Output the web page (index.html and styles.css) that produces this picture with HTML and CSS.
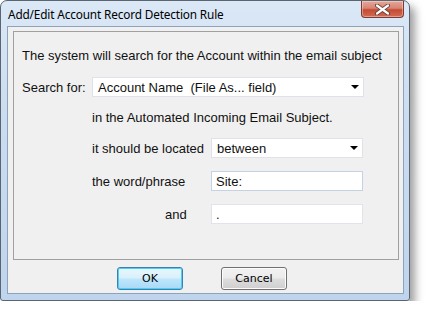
FILE: index.html
```html
<!DOCTYPE html>
<html lang="en">
<head>
  <meta charset="UTF-8" />
  <title>Add/Edit Account Record Detection Rule</title>
  <link rel="stylesheet" href="styles.css">
</head>
<body>
  <div class="window">
    <div class="titlebar">
      <span class="title">Add/Edit Account Record Detection Rule</span>
      <button class="close" title="Close">
        <svg width="17" height="11" viewBox="0 0 17 11">
          <path d="M3 1.5 L14 9.5 M14 1.5 L3 9.5" stroke="#5a3b36" stroke-width="4" stroke-linecap="round"/>
          <path d="M3 1.5 L14 9.5 M14 1.5 L3 9.5" stroke="#ffffff" stroke-width="2.2" stroke-linecap="round"/>
        </svg>
      </button>
    </div>

    <div class="client">
      <div class="panel">
        <p class="intro">The system will search for the Account within the email subject</p>

        <div class="form">
          <label class="lbl-search">Search for:</label>
          <div class="combo wide"><span>Account Name&nbsp; (File As... field)</span><i class="arrow"></i></div>

          <p class="note">in the Automated Incoming Email Subject.</p>

          <label>it should be located</label>
          <div class="combo"><span>between</span><i class="arrow"></i></div>

          <label>the word/phrase</label>
          <div class="field">Site:</div>

          <label class="lbl-and">and</label>
          <div class="field plain">.</div>
        </div>
      </div>

      <div class="buttons">
        <button class="btn default">OK</button>
        <button class="btn">Cancel</button>
      </div>
    </div>
  </div>
</body>
</html>
```

FILE: styles.css
```css
* {
  margin: 0;
  padding: 0;
  box-sizing: border-box;
}

body {
  background-color: #ffffff;
  font-family: 'Liberation Sans', Arial, sans-serif;
  font-size: 13px;
  color: #111;
}

/* janela */
.window {
  width: 410px;
  height: 301px;
  border: 1px solid #5b6572;
  border-radius: 7px 7px 3px 3px;
  background: linear-gradient(to bottom, #dbe8f6 0%, #cadcf0 40%, #bfd5ed 100%);
  box-shadow: 5px 6px 8px rgba(0, 0, 0, 0.38);
  padding: 0 5px 6px 6px;
  display: flex;
  flex-direction: column;
}

.titlebar {
  height: 25px;
  display: flex;
  align-items: flex-start;
  justify-content: space-between;
}

.title {
  font-family: 'Noto Sans', 'Liberation Sans', sans-serif;
  font-size: 11.8px;
  color: #000;
  padding: 5px 0 0 1px;
  letter-spacing: -0.15px;
}

.close {
  width: 43px;
  height: 17px;
  margin-right: 0;
  border: 1px solid #7d3a33;
  border-top: none;
  border-radius: 0 0 4px 4px;
  background: linear-gradient(to bottom, #e7a799 0%, #d88472 45%, #c44b35 55%, #d36a52 100%);
  box-shadow: inset 0 0 0 1px rgba(255, 255, 255, 0.35);
  display: flex;
  align-items: center;
  justify-content: center;
}

.client {
  flex: 1;
  background-color: #f0f0f0;
  border: 1px solid #8ea2b9;
  display: flex;
  flex-direction: column;
}

/* painel com o formulario */
.panel {
  margin: 4px 4px 0 5px;
  height: 229px;
  border: 1px solid #a0a0a0;
  padding: 16px 0 0 8px;
}

.intro {
  line-height: 16px;
  margin-bottom: 13px;
}

.form {
  display: grid;
  grid-template-columns: 70px 119px 153px;
  grid-template-rows: 20px 30px 31px 33px 33px;
  align-items: end;
}

.form label,
.form .note {
  height: 20px;
  display: flex;
  align-items: center;
}

.form .note {
  grid-column: 2 / 4;
}

.form label:not(.lbl-search) {
  grid-column: 2;
}

.lbl-and {
  padding-left: 73px;
}

.combo,
.field {
  height: 20px;
  background-color: #fff;
  border: 1px solid #dfe2e8;
  display: flex;
  align-items: center;
  padding-left: 5px;
}

.form .combo:last-of-type,
.field {
  height: 21px;
}

.combo.wide {
  grid-column: 2 / 4;
  height: 20px;
}

.combo span {
  flex: 1;
  white-space: nowrap;
}

.combo .arrow {
  width: 0;
  height: 0;
  border-left: 4px solid transparent;
  border-right: 4px solid transparent;
  border-top: 4px solid #000;
  margin-right: 4px;
}

.combo:not(.wide) {
  width: 152px;
}

.field {
  width: 152px;
  height: 20px;
  border-color: #c3d3e4;
  padding-left: 4px;
}

.field.plain {
  border-color: #e2e3ea;
}

/* botoes */
.buttons {
  display: flex;
  gap: 38px;
  padding: 7px 0 0 109px;
}

.btn {
  width: 66px;
  height: 23px;
  border: 1px solid #707070;
  border-radius: 3px;
  background: linear-gradient(to bottom, #f2f2f2 0%, #ebebeb 48%, #dddddd 52%, #cfcfcf 100%);
  box-shadow: inset 0 0 0 1px #fcfcfc;
  font-family: 'DejaVu Sans', sans-serif;
  font-size: 11px;
  color: #000;
}

.btn.default {
  border-color: #3c7fb1;
  background: linear-gradient(to bottom, #eaf6fd 0%, #d9f0fc 48%, #bee6fd 52%, #a7d9f5 100%);
  box-shadow: inset 0 0 0 1px #48d1f4;
}
```
